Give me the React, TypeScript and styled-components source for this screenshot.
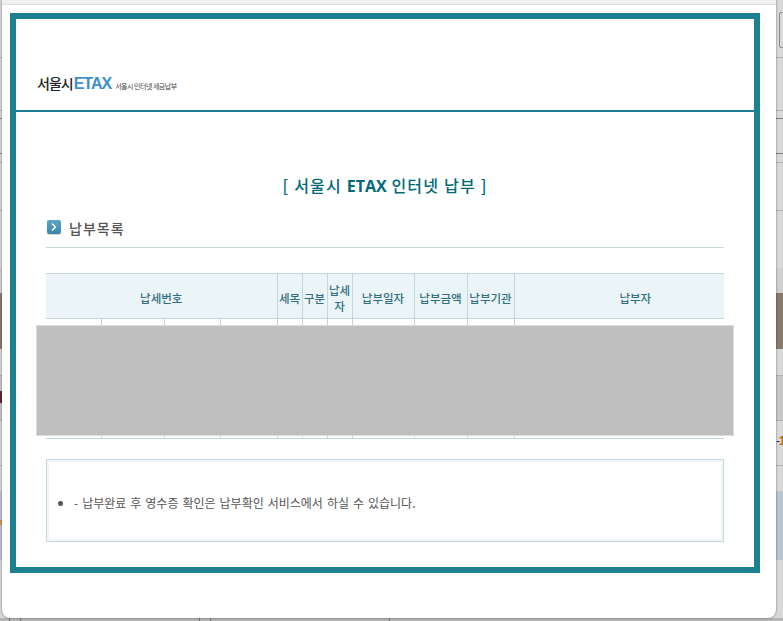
import * as React from 'react';
import styled, {createGlobalStyle} from 'styled-components';
import {ChevronRight} from 'lucide-react';

const GlobalStyle = createGlobalStyle`
    html, body {
        margin: 0;
        padding: 0;
        overflow: hidden;
    }
    body {
        font-family: "Noto Sans CJK KR", "Noto Sans", sans-serif;
    }
`;

const Stage = styled.div`
    display: flex;
    width: 783px;
    height: 621px;
    overflow: hidden;
    background:
        linear-gradient(to right, transparent 9px, #6c6c84 9px, #6c6c84 10px, transparent 10px, transparent 20px, #6c6c84 20px, #6c6c84 21px, transparent 21px, transparent 199px, #6c6c84 199px, #6c6c84 200px, transparent 200px, transparent 210px, #6c6c84 210px, #6c6c84 211px, transparent 211px, transparent 389px, #6c6c84 389px, #6c6c84 390px, transparent 390px) 0 618px / 100% 3px no-repeat,
        linear-gradient(to bottom,
            #d8d8d8 0, #d8d8d8 57px, #b4b4b4 57px, #b4b4b4 58px,
            #d8d8d8 58px, #d8d8d8 110px, #b4b4b4 110px, #b4b4b4 111px,
            #d8d8d8 111px, #d8d8d8 118px, #7c7c7c 118px, #7c7c7c 119px,
            #d8d8d8 119px, #d8d8d8 153px, #7c7c7c 153px, #7c7c7c 154px,
            #d8d8d8 154px, #d8d8d8 162px, #b4b4b4 162px, #b4b4b4 163px,
            #d8d8d8 163px, #d8d8d8 210px, #b4b4b4 210px, #b4b4b4 211px,
            #d8d8d8 211px, #d8d8d8 268px, #d0d0d0 268px, #d0d0d0 293px,
            #857c6d 293px, #857c6d 349px,
            #d8d8d8 349px, #d8d8d8 375px, #b0b0b0 375px, #b0b0b0 376px,
            #c6c6c6 376px, #c6c6c6 420px, #b0b0b0 420px, #b0b0b0 421px,
            #d8d8d8 421px, #d8d8d8 465px, #b4b4b4 465px, #b4b4b4 466px,
            #d8d8d8 466px, #d8d8d8 491px,
            #b9c5cf 491px, #b9c5cf 560px,
            #d8d8d8 560px, #d8d8d8 618px,
            #b4b4b4 618px, #b4b4b4 621px);
`;

const LeftStrip = styled.div`
    flex: none;
    width: 2px;
    height: 618px;
    background: linear-gradient(to bottom,
        transparent 0, transparent 391px,
        #5a2a2e 391px, #5a2a2e 403px,
        transparent 403px, transparent 520px,
        #d09a50 520px, #d09a50 525px,
        transparent 525px);
`;

const Modal = styled.div`
    display: flex;
    flex-direction: column;
    flex: none;
    width: 774px;
    height: 618px;
    background: #fff;
    border-radius: 0 0 8px 8px;
    box-shadow: 0 0 2px rgba(0, 0, 0, 0.6);
    overflow: hidden;
`;

const TopStrip = styled.div`
    flex: none;
    height: 4px;
    background: #eef0f2;
    border-bottom: 1px solid #d9dddd;
`;

const Frame = styled.div`
    box-sizing: border-box;
    width: 750px;
    height: 560px;
    margin: 8px 0 0 8px;
    border: 6px solid #1c8090;
`;

const Header = styled.header`
    box-sizing: border-box;
    display: flex;
    align-items: flex-end;
    height: 93px;
    padding: 0 0 17px 21px;
    border-bottom: 2px solid #1c8090;
`;

const LogoCity = styled.span`
    font-size: 14px;
    line-height: 20px;
    font-weight: 500;
    letter-spacing: -1px;
    color: #222;
`;

const LogoEtax = styled.span`
    margin: 0 0 -1px 1px;
    font-family: "Liberation Sans", sans-serif;
    font-size: 16px;
    line-height: 20px;
    font-weight: 700;
    letter-spacing: -1px;
    color: #3f8fca;
`;

const LogoTag = styled.span`
    margin-left: 4px;
    font-size: 7px;
    line-height: 14px;
    letter-spacing: -0.5px;
    color: #444;
`;

const Content = styled.main`
    padding: 0 30px;
`;

const Title = styled.h1`
    margin: 58px 0 0;
    font-size: 16px;
    line-height: 30px;
    font-weight: 500;
    letter-spacing: 1.2px;
    text-align: center;
    color: #006a76;

    b {
        font-family: "Open Sans", sans-serif;
        font-weight: 700;
        letter-spacing: 0;
    }
`;

const SectionHead = styled.div`
    display: flex;
    align-items: center;
    gap: 8px;
    height: 20px;
    padding: 17px 0 9px;
    border-bottom: 1px solid #c9dadd;
`;

const SectionIcon = styled.span`
    display: flex;
    align-items: center;
    justify-content: center;
    width: 14px;
    height: 14px;
    margin: -3px 0 0 1px;
    border-radius: 2px;
    background: linear-gradient(to bottom, #5aa6c6, #3d84ab);
    box-shadow: 0 1px 1px #d4d4cc;
    color: #fff;
`;

const SectionTitle = styled.h2`
    margin: 0;
    font-size: 14px;
    line-height: 20px;
    font-weight: 500;
    letter-spacing: 1px;
    color: #555;
`;

const TableWrap = styled.div`
    position: relative;
    margin-top: 25px;
`;

const Table = styled.table`
    width: 678px;
    table-layout: fixed;
    border-collapse: collapse;
`;

const HeadCell = styled.th<{$indent?: number}>`
    height: 40px;
    padding: 4px 1px 0 ${props => props.$indent ?? 1}px;
    background: #ebf4f6;
    border: 1px solid #bfd9dd;
    font-size: 11.5px;
    line-height: 16px;
    font-weight: 500;
    color: #33707f;

    &:first-child {
        border-left: 0;
    }
    &:last-child {
        border-right: 0;
    }
`;

const BodyCell = styled.td`
    height: 119px;
    padding: 0;
    border: 1px solid #bfd9dd;

    &:first-child {
        border-left: 0;
    }
    &:last-child {
        border-right: 0;
    }
`;

const Redaction = styled.div`
    position: absolute;
    top: 52px;
    left: -10px;
    box-sizing: border-box;
    width: 698px;
    height: 111px;
    background: #bfbfbf;
    border: 1px solid #dcdcdc;
`;

const Notice = styled.div`
    box-sizing: border-box;
    display: flex;
    align-items: center;
    height: 83px;
    margin-top: 20px;
    padding-top: 4px;
    border: 1px solid #c5d8dd;
    box-shadow: inset 0 0 0 2px #f2f6f7;
`;

const NoticeList = styled.ul`
    margin: 0;
    padding: 0 0 0 27px;
`;

const NoticeItem = styled.li`
    font-size: 12px;
    line-height: 18px;
    word-spacing: 1.3px;
    color: #555;
`;

const RightStrip = styled.div`
    flex: none;
    width: 7px;
    padding-top: 12px;
    overflow: hidden;
    white-space: nowrap;
    font-family: "Liberation Sans", sans-serif;
    font-size: 12px;
    line-height: 13px;
    letter-spacing: -1px;
    color: #333;

    b {
        font-weight: 700;
        color: #a8660c;
    }
`;

const SideBox = styled.div`
    box-sizing: border-box;
    height: 36px;
    margin: 0 -4px 387px 3px;
    border: 1px solid #8a8a8a;
    border-radius: 2px;
`;

const COLUMN_WIDTHS = [55, 63, 56, 57, 25, 25, 25, 62, 53, 47, 210];
const HEADINGS = ['세목', '구분', '납세자', '납부일자', '납부금액', '납부기관'];

const App = () => (
    <Stage>
        <GlobalStyle/>
        <LeftStrip/>
        <Modal>
            <TopStrip/>
            <Frame>
                <Header>
                    <LogoCity>서울시</LogoCity>
                    <LogoEtax>ETAX</LogoEtax>
                    <LogoTag>서울시 인터넷 세금납부</LogoTag>
                </Header>
                <Content>
                    <Title>[ 서울시 <b>ETAX</b> 인터넷 납부 ]</Title>
                    <SectionHead>
                        <SectionIcon>
                            <ChevronRight size={12} strokeWidth={3}/>
                        </SectionIcon>
                        <SectionTitle>납부목록</SectionTitle>
                    </SectionHead>
                    <TableWrap>
                        <Table>
                            <colgroup>
                                {COLUMN_WIDTHS.map((width, i) => <col key={i} width={width}/>)}
                            </colgroup>
                            <thead>
                                <tr>
                                    <HeadCell colSpan={4}>납세번호</HeadCell>
                                    {HEADINGS.map(heading => <HeadCell key={heading}>{heading}</HeadCell>)}
                                    <HeadCell $indent={33}>납부자</HeadCell>
                                </tr>
                            </thead>
                            <tbody>
                                <tr>
                                    {COLUMN_WIDTHS.map((_, i) => <BodyCell key={i}/>)}
                                </tr>
                            </tbody>
                        </Table>
                        <Redaction/>
                    </TableWrap>
                    <Notice>
                        <NoticeList>
                            <NoticeItem>- 납부완료 후 영수증 확인은 납부확인 서비스에서 하실 수 있습니다.</NoticeItem>
                        </NoticeList>
                    </Notice>
                </Content>
            </Frame>
        </Modal>
        <RightStrip>
            <SideBox/>
            -<b>1</b>
        </RightStrip>
    </Stage>
);

export default App;
